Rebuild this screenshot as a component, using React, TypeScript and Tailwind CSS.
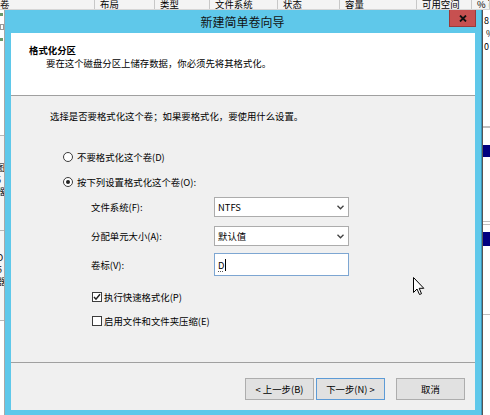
import React from 'react';

// Columns of the disk list sitting behind the wizard
const columns = [
  { label: '卷', width: 95 },
  { label: '布局', width: 60 },
  { label: '类型', width: 55 },
  { label: '文件系统', width: 68 },
  { label: '状态', width: 62 },
  { label: '容量', width: 77 },
  { label: '可用空间', width: 55 },
  { label: '% 可', width: 18 },
];

function Chevron() {
  return (
    <svg width="7" height="5" viewBox="0 0 7 5" className="shrink-0">
      <path d="M0.5 0.8 L3.5 3.8 L6.5 0.8" fill="none" stroke="#404040" strokeWidth="1.3" />
    </svg>
  );
}

function Radio({ checked, label }: { checked?: boolean; label: string }) {
  return (
    <div className="flex items-center h-[12px] leading-[12px]">
      <span className="w-[10px] h-[10px] rounded-full border border-[#3c3c3c] bg-white flex items-center justify-center">
        {checked && <span className="w-[4px] h-[4px] rounded-full bg-[#222]" />}
      </span>
      <span className="ml-[4px]">{label}</span>
    </div>
  );
}

function Checkbox({ checked, label }: { checked?: boolean; label: string }) {
  return (
    <div className="flex items-center h-[12px] leading-[12px]">
      <span className="w-[10px] h-[10px] border border-[#3c3c3c] bg-white flex items-center justify-center">
        {checked && (
          <svg width="8" height="8" viewBox="0 0 8 8">
            <path d="M1 4 L3 6.2 L7 1.3" fill="none" stroke="#222" strokeWidth="1.5" />
          </svg>
        )}
      </span>
      <span className="ml-[2px]">{label}</span>
    </div>
  );
}

function Background() {
  return (
    <div className="absolute inset-0 flex flex-col bg-white">
      {/* list header */}
      <div className="flex h-[10px] overflow-hidden bg-[#f4f4f4] border-b border-[#d6d6d6] shrink-0">
        {columns.map((c, i) => (
          <div
            key={i}
            style={{ width: c.width }}
            className="shrink-0 flex items-end pl-[5px] first:pl-0 border-r border-[#c8c8c8] leading-[10px] overflow-hidden whitespace-nowrap"
          >
            {c.label}
          </div>
        ))}
      </div>
      <div className="flex-1 flex justify-between">
        {/* left edge of the disk view */}
        <div className="w-[5px] flex flex-col border-r border-[#a8a8a8] text-[9px] leading-[12px] overflow-hidden">
          <div className="h-[125px] flex flex-col gap-[8px] pt-[3px]">
            <span className="w-[3px] h-[3px] bg-[#6a9a6a]" />
            <span className="w-[4px] h-[6px] border border-[#999]" />
            <span className="w-[3px] h-[3px] bg-[#6a9a6a]" />
          </div>
          <div className="h-[95px] border-t border-[#b8b8b8] bg-[#f6f6f6] pt-[26px] -ml-[4px]">
            <div>图</div>
            <div>6</div>
            <div>器</div>
          </div>
          <div className="h-[90px] border-t border-[#b8b8b8] bg-[#f6f6f6] pt-[21px] -ml-[3px]">
            <div>D</div>
            <div>5</div>
            <div>器</div>
          </div>
          <div className="flex-1 border-t border-[#b8b8b8]" />
        </div>
        {/* right edge of the list and disk view */}
        <div className="w-[8px] flex flex-col border-l border-[#555] leading-[13px] text-[9px] overflow-hidden">
          <div className="h-[116px] pt-[4px] pl-[1px]">
            <div>8</div>
            <div className="pl-[2px]">%</div>
            <div>0</div>
          </div>
          <div className="h-[2px] border-y border-[#c0c0c0]" />
          <div className="h-[17px]" />
          <div className="h-[12px] bg-[#000080]" />
          <div className="h-[64px]" />
          <div className="h-[4px] border-y border-[#c0c0c0]" />
          <div className="h-[7px]" />
          <div className="h-[14px] bg-[#000080]" />
          <div className="h-[68px]" />
          <div className="h-[1px] bg-[#c0c0c0]" />
          <div className="flex-1" />
        </div>
      </div>
    </div>
  );
}

function Dialog() {
  return (
    <div className="absolute left-[5px] top-[10px] w-[477px] h-[405px] bg-[#5fc8ea] border-r border-[#3b97bd] flex flex-col px-[6px] pb-[5px]">
      {/* title bar */}
      <div className="h-[23px] shrink-0 flex items-center justify-center text-[12px] text-[#111] -ml-[1px]">
        新建简单卷向导
      </div>
      <div className="absolute right-[5px] top-0 w-[27px] h-[17px] bg-[#c75050] border border-[#9a3a3a] border-t-0 flex items-center justify-center">
        <svg width="8" height="7" viewBox="0 0 8 7">
          <path d="M1 0.5 L7 6.5 M7 0.5 L1 6.5" stroke="#111" strokeWidth="1.8" />
        </svg>
      </div>

      <div className="flex-1 flex flex-col bg-[#f0f0f0]">
        {/* page header */}
        <div className="h-[63px] bg-white border-b border-[#a0a0a0] leading-[12px] pt-[11px]">
          <div className="pl-[18px] font-bold">格式化分区</div>
          <div className="pl-[35px] mt-[1px]">要在这个磁盘分区上储存数据，你必须先将其格式化。</div>
        </div>

        {/* page body */}
        <div className="h-[266px] pt-[14px] leading-[12px]">
          <div className="pl-[39px]">选择是否要格式化这个卷；如果要格式化，要使用什么设置。</div>

          <div className="pl-[52px] mt-[29px] flex flex-col gap-[13px]">
            <Radio label="不要格式化这个卷(D)" />
            <Radio checked label="按下列设置格式化这个卷(O):" />
          </div>

          <div className="pl-[80px] mt-[9px] flex flex-col">
            <div className="flex items-center h-[20px]">
              <span className="w-[123px]">文件系统(F):</span>
              <div className="w-[135px] h-[20px] bg-white border border-[#acacac] flex items-center justify-between pl-[3px] pr-[4px]">
                <span>NTFS</span>
                <Chevron />
              </div>
            </div>
            <div className="flex items-center h-[20px] mt-[9px]">
              <span className="w-[123px]">分配单元大小(A):</span>
              <div className="w-[135px] h-[20px] bg-white border border-[#acacac] flex items-center justify-between pl-[3px] pr-[4px]">
                <span>默认值</span>
                <Chevron />
              </div>
            </div>
            <div className="flex items-center h-[23px] mt-[7px]">
              <span className="w-[123px]">卷标(V):</span>
              <div className="w-[135px] h-[23px] bg-white border border-[#7da6d2] flex items-center pl-[3px]">
                <span className="underline decoration-dotted decoration-[#555] underline-offset-2">D</span>
                <span className="w-[1px] h-[12px] bg-black ml-[1px]" />
              </div>
            </div>
          </div>

          <div className="pl-[81px] mt-[15px] flex flex-col gap-[12px]">
            <Checkbox checked label="执行快速格式化(P)" />
            <Checkbox label="启用文件和文件夹压缩(E)" />
          </div>
        </div>

        {/* buttons */}
        <div className="flex-1 border-t border-[#a0a0a0] flex justify-end items-start pt-[15px] pr-[10px]">
          <button className="w-[69px] h-[22px] bg-[#e1e1e1] border border-[#adadad] leading-[12px]">&lt; 上一步(B)</button>
          <button className="w-[69px] h-[22px] ml-[2px] bg-[#e1e1e1] border border-[#5d9bd6] leading-[12px]">下一步(N) &gt;</button>
          <button className="w-[69px] h-[22px] ml-[11px] bg-[#e1e1e1] border border-[#adadad] leading-[12px]">取消</button>
        </div>
      </div>
    </div>
  );
}

function Cursor() {
  return (
    <svg className="absolute left-[413px] top-[277px]" width="12" height="19" viewBox="0 0 12 19">
      <path d="M0.5 0.5 L0.5 15.5 L4 12 L6.5 17.5 L8.5 16.7 L6.2 11.3 L10.8 11.3 Z" fill="#fff" stroke="#000" strokeWidth="1" />
    </svg>
  );
}

export default function App() {
  return (
    <div className="relative w-[490px] h-[415px] overflow-hidden font-['Microsoft_YaHei','Noto_Sans_CJK_SC',sans-serif] text-[9.4px] text-black">
      <Background />
      <Dialog />
      <Cursor />
    </div>
  );
}
